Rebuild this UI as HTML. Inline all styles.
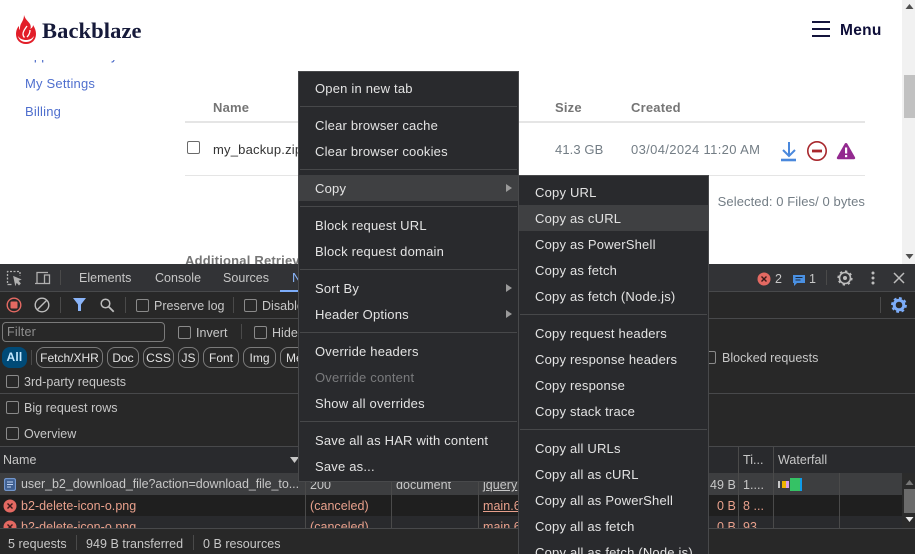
<!DOCTYPE html>
<html><head><meta charset="utf-8"><style>
html,body{margin:0;padding:0;background:#fff}
#r{position:relative;width:915px;height:554px;overflow:hidden;font:13px/20px "Liberation Sans",sans-serif;letter-spacing:.2px;background:#fff}
#r div,#r svg,#r span.t{position:absolute}
.t{white-space:nowrap;height:20px;margin-top:1px}
.l{color:#c7c7c7;font-size:12.5px;letter-spacing:.03px}
.m{color:#e3e3e3}
.r{color:#e8a08c;font-size:12.5px;letter-spacing:.03px}
.sep{height:1px;background:#47484a}
.cb{width:11px;height:11px;border:1px solid #8a8a8a;border-radius:2px;box-sizing:content-box}
.chip{height:19px;border:1px solid #7a7a7a;border-radius:8px;top:347px;color:#e3e3e3;text-align:center;line-height:20px;font-size:12px;letter-spacing:0}
.v{width:1px;background:#4a4a4a}
.g{color:#737d85;letter-spacing:.1px}
</style></head><body><div id="r">
<!-- page -->
<svg style="left:16px;top:14px" width="20" height="31" viewBox="0 0 20 31"><path fill="#e21e29" d="M8 1c1 4 4 6 6 9 1 2 1 4 0 5 2-1 3-2 3-4 2 3 3 6 3 9 0 6-4 10-10 10S0 26 0 20c0-3 1-6 3-8 0 2 0 3 1 4 0-3 0-5 2-8 1-2 2-4 2-7z"/><path fill="#fff" d="M2 22c2 3 5 4 8 4s6-1 8-4c-1 4-4 6-8 6s-7-2-8-6z"/><path fill="none" stroke="#fff" stroke-width="1.300" d="M11 12c-2 3-4 5-4 8 0 1.500.5 2.500 1.500 3.500M14 16c0 3-1 5-3 7"/></svg>
<span class="t" style="left:42px;top:20px;font:bold 22.5px/20px 'Liberation Serif',serif;color:#161a3a;letter-spacing:.1px">Backblaze</span>
<div style="left:812px;top:21px;width:18px;height:2px;background:#14143c"></div>
<div style="left:812px;top:28px;width:18px;height:2px;background:#14143c"></div>
<div style="left:812px;top:35px;width:18px;height:2px;background:#14143c"></div>
<span class="t" style="left:840px;top:20px;font-weight:bold;font-size:15.5px;color:#0d0d38;letter-spacing:.3px">Menu</span>
<div style="left:25px;top:60px;width:140px;height:2.5px;overflow:hidden"><span class="t" style="left:0;top:-15px;color:#4a69c8">Application Keys</span></div>
<span class="t" style="left:25px;top:73px;color:#4f6fce">My Settings</span>
<span class="t" style="left:25px;top:101px;color:#4f6fce">Billing</span>
<span class="t" style="left:213px;top:97px;font-weight:bold;color:#757575">Name</span>
<span class="t" style="left:555px;top:97px;font-weight:bold;color:#757575">Size</span>
<span class="t" style="left:631px;top:97px;font-weight:bold;color:#757575">Created</span>
<div style="left:185px;top:121px;width:680px;height:2px;background:#e5e5e5"></div>
<div style="left:187px;top:141px;width:11px;height:11px;border:1px solid #6a6a6a;border-radius:2px"></div>
<span class="t" style="left:213px;top:139px;color:#333">my_backup.zip</span>
<span class="t g" style="left:555px;top:139px">41.3 GB</span>
<span class="t g" style="left:631px;top:139px;letter-spacing:.35px">03/04/2024 11:20 AM</span>
<svg style="left:780px;top:141px" width="18" height="21" viewBox="0 0 18 21"><path fill="none" stroke="#4a88dc" stroke-width="2" d="M9 1v14M3 9l6 6 6-6"/><path fill="none" stroke="#4a88dc" stroke-width="2.6" d="M1 19h15"/></svg>
<svg style="left:806px;top:140px" width="22" height="22" viewBox="0 0 22 22"><circle cx="11" cy="11" r="9.2" fill="none" stroke="#a8282d" stroke-width="1.6"/><rect x="6" y="9.6" width="10" height="2.8" fill="#a8282d"/></svg>
<svg style="left:836px;top:142px" width="20" height="18" viewBox="0 0 20 18"><path fill="#93298f" d="M10 1c.6 0 1 .3 1.300.8l7.700 13.500c.5 1 0 1.900-1 1.900H2c-1 0-1.500-.9-1-1.900L8.700 1.800C9 1.300 9.400 1 10 1z"/><rect x="9" y="5.500" width="2.200" height="6" fill="#fff"/><rect x="9" y="13" width="2.200" height="2.200" fill="#fff"/></svg>
<div style="left:185px;top:175px;width:680px;height:1px;background:#e5e5e5"></div>
<span class="t g" style="right:50px;top:191px;letter-spacing:.08px">Selected: 0 Files/ 0 bytes</span>
<div style="left:185px;top:250px;width:120px;height:14px;overflow:hidden"><span class="t" style="left:0;top:0;font-weight:bold;color:#757575">Additional Retrieval</span></div>
<!-- scrollbar -->
<div style="left:902px;top:0;width:13px;height:264px;background:#f1f1f1"></div>
<div style="left:904px;top:75px;width:11px;height:43px;background:#c1c1c1"></div>
<svg style="left:904px;top:3px" width="11" height="7"><path fill="#505050" d="M5.500 1l4 5h-8z"/></svg>
<svg style="left:904px;top:253px" width="11" height="7"><path fill="#505050" d="M1.500 1h8l-4 5z"/></svg>
<!-- devtools -->
<div style="left:0;top:264px;width:915px;height:290px;background:#282828"></div>
<div style="left:0;top:264px;width:915px;height:27px;background:#323336"></div>
<div style="left:0;top:291px;width:915px;height:1px;background:#48494b"></div>
<div style="left:0;top:318px;width:915px;height:1px;background:#48494b"></div>
<svg style="left:6px;top:270px" width="16" height="16" fill="none" stroke="#b0b0b0" stroke-width="1.300"><path stroke-dasharray="2 1.500" d="M1.500 13V1.500H14V6"/><path d="M1.500 14.500h4"/><path fill="#b0b0b0" d="M8 7l6 2.500-2.500 1 2.500 3-1 1-2.500-3-1 2.500z"/></svg>
<svg style="left:34px;top:271px" width="17" height="14" fill="none" stroke="#b0b0b0" stroke-width="1.300"><path d="M1 12.500h9M3 12V1.500h11"/><rect x="10.500" y="4" width="5" height="8.500"/></svg>
<div class="v" style="left:60px;top:270px;height:15px"></div>
<span class="t l" style="left:79px;top:267px">Elements</span>
<span class="t l" style="left:155px;top:267px">Console</span>
<span class="t l" style="left:223px;top:267px">Sources</span>
<span class="t" style="left:292px;top:267px;color:#8ab4f8">N</span>
<div style="left:280px;top:290px;width:19px;height:2px;background:#7cacf8"></div>
<svg style="left:757px;top:272px" width="14" height="14"><circle cx="7" cy="7" r="6.500" fill="#e46962"/><path stroke="#3a1a1a" stroke-width="1.400" d="M4.500 4.500l5 5M9.500 4.500l-5 5"/></svg>
<span class="t l" style="left:775px;top:268px">2</span>
<svg style="left:793px;top:274px" width="12" height="12"><path fill="#4a90e2" d="M0 1h12v8H4l-3 3V9H0z"/><path stroke="#1a2a40" d="M2.500 3.500h7M2.500 6h5"/></svg>
<span class="t l" style="left:809px;top:268px">1</span>
<div class="v" style="left:826px;top:270px;height:15px"></div>
<svg style="left:837px;top:270px" width="16" height="16" viewBox="0 0 16 16"><circle cx="8" cy="8" r="5.500" fill="none" stroke="#bdbdbd" stroke-width="1.600"/><circle cx="8" cy="8" r="2" fill="#bdbdbd"/><circle cx="8" cy="8" r="6.800" fill="none" stroke="#bdbdbd" stroke-width="1.600" stroke-dasharray="2.400 2.900"/></svg>
<svg style="left:871px;top:271px" width="4" height="14" fill="#bdbdbd"><circle cx="2" cy="2" r="1.500"/><circle cx="2" cy="7" r="1.500"/><circle cx="2" cy="12" r="1.500"/></svg>
<svg style="left:893px;top:272px" width="12" height="12"><path stroke="#bdbdbd" stroke-width="1.500" d="M1 1l10 10M11 1L1 11"/></svg>
<!-- row2 -->
<svg style="left:6px;top:297px" width="16" height="16"><circle cx="8" cy="8" r="6.800" fill="none" stroke="#e46962" stroke-width="1.400"/><rect x="4.500" y="4.500" width="7" height="7" rx="1" fill="#e46962"/></svg>
<svg style="left:34px;top:297px" width="16" height="16" fill="none" stroke="#bdbdbd" stroke-width="1.400"><circle cx="8" cy="8" r="6.800"/><path d="M3.500 12.500l9-9"/></svg>
<div class="v" style="left:60px;top:297px;height:16px"></div>
<svg style="left:73px;top:298px" width="13" height="13"><path fill="#8ab4f8" d="M0 0h13L8 6.500V13H5V6.500z"/></svg>
<svg style="left:100px;top:298px" width="15" height="15" fill="none" stroke="#bdbdbd" stroke-width="1.500"><circle cx="5.500" cy="5.500" r="4.300"/><path stroke-width="1.800" d="M8.700 8.700l5 5"/></svg>
<div class="v" style="left:125px;top:297px;height:16px"></div>
<div class="cb" style="left:136px;top:299px"></div>
<span class="t l" style="left:154px;top:295px">Preserve log</span>
<div class="v" style="left:233px;top:297px;height:16px"></div>
<div class="cb" style="left:244px;top:299px"></div>
<span class="t l" style="left:262px;top:295px">Disable cache</span>
<div class="v" style="left:880px;top:297px;height:16px"></div>
<svg style="left:891px;top:297px" width="16" height="16" viewBox="0 0 16 16"><circle cx="8" cy="8" r="4.800" fill="none" stroke="#7cacf8" stroke-width="3"/><circle cx="8" cy="8" r="6.800" fill="none" stroke="#7cacf8" stroke-width="2.200" stroke-dasharray="2.800 2.500"/></svg>
<!-- filter -->
<div style="left:2px;top:322px;width:161px;height:18px;border:1px solid #7a7a7a;border-radius:4px"></div>
<span class="t" style="left:7px;top:321px;color:#8f8f8f;font-size:12.5px">Filter</span>
<div class="cb" style="left:178px;top:326px"></div>
<span class="t l" style="left:196px;top:322px">Invert</span>
<div class="v" style="left:241px;top:324px;height:15px"></div>
<div class="cb" style="left:254px;top:326px"></div>
<span class="t l" style="left:272px;top:322px">Hide data URLs</span>
<div style="left:2px;top:347px;width:25px;height:21px;border-radius:8px;background:#004a77;color:#c2e7ff;text-align:center;line-height:21px;font-size:12px;font-weight:bold">All</div>
<div class="v" style="left:31px;top:350px;height:15px"></div>
<div class="chip" style="left:36px;width:65px">Fetch/XHR</div>
<div class="chip" style="left:107px;width:30px">Doc</div>
<div class="chip" style="left:143px;width:29px">CSS</div>
<div class="chip" style="left:178px;width:19px">JS</div>
<div class="chip" style="left:203px;width:34px">Font</div>
<div class="chip" style="left:243px;width:31px">Img</div>
<div class="chip" style="left:280px;width:30px;text-align:left;text-indent:5px">Media</div>
<div class="cb" style="left:703px;top:351px"></div>
<span class="t l" style="left:722px;top:347px">Blocked requests</span>
<div class="cb" style="left:6px;top:375px"></div>
<span class="t l" style="left:24px;top:371px">3rd-party requests</span>
<div style="left:0;top:393px;width:915px;height:1px;background:#48494b"></div>
<div class="cb" style="left:6px;top:401px"></div>
<span class="t l" style="left:24px;top:397px">Big request rows</span>
<div class="cb" style="left:6px;top:427px"></div>
<span class="t l" style="left:24px;top:423px">Overview</span>
<div style="left:0;top:446px;width:915px;height:1px;background:#48494b"></div>
<!-- table -->
<div style="left:0;top:447px;width:915px;height:26px;background:#292a2d"></div>
<div style="left:0;top:473px;width:902px;height:22px;background:#3d3e40"></div>
<div style="left:0;top:495px;width:902px;height:21px;background:#1f1f1f"></div>
<div style="left:0;top:516px;width:902px;height:12px;background:#292a2d"></div>
<div style="left:902px;top:473px;width:13px;height:55px;background:#2b2b2b"></div>
<div style="left:904px;top:489px;width:11px;height:24px;background:#6b6b6b"></div>
<svg style="left:904px;top:479px" width="11" height="7"><path fill="#777" d="M5.500 1l4 5h-8z"/></svg>
<svg style="left:904px;top:516px" width="11" height="7"><path fill="#eee" d="M1.500 1h8l-4 5z"/></svg>
<div class="v" style="left:305px;top:447px;height:81px"></div>
<div class="v" style="left:391px;top:447px;height:81px"></div>
<div class="v" style="left:478px;top:447px;height:81px"></div>
<div class="v" style="left:738px;top:447px;height:81px"></div>
<div class="v" style="left:773px;top:447px;height:81px"></div>
<div class="v" style="left:839px;top:473px;height:55px"></div>
<span class="t l" style="left:3px;top:449px">Name</span>
<svg style="left:290px;top:457px" width="9" height="6"><path fill="#c7c7c7" d="M0 0h9L4.500 6z"/></svg>
<span class="t l" style="left:743px;top:449px">Ti...</span>
<span class="t l" style="left:778px;top:449px">Waterfall</span>
<svg style="left:4px;top:478px" width="12" height="13"><rect x=".6" y=".6" width="10.800" height="11.800" rx="1.500" fill="#3f5f90" stroke="#7aa2e0"/><path stroke="#c2d6f5" d="M3 4h6M3 6.500h6M3 9h4"/></svg>
<div style="left:0;top:474px;width:303px;height:21px;overflow:hidden"><span class="t l" style="left:21px;top:-1px;letter-spacing:-.05px">user_b2_download_file?action=download_file_to...</span></div>
<span class="t l" style="left:310px;top:474px">200</span>
<span class="t l" style="left:396px;top:474px">document</span>
<span class="t l" style="left:483px;top:474px;text-decoration:underline">jquery</span>
<span class="t l" style="left:710px;top:474px">49 B</span>
<span class="t l" style="left:743px;top:474px">1....</span>
<svg style="left:3px;top:499px" width="14" height="14"><circle cx="7" cy="7" r="6.500" fill="#e46962"/><path stroke="#3a1a1a" stroke-width="1.400" d="M4.500 4.500l5 5M9.500 4.500l-5 5"/></svg>
<span class="t r" style="left:21px;top:495px">b2-delete-icon-o.png</span>
<span class="t r" style="left:310px;top:495px">(canceled)</span>
<span class="t r" style="left:483px;top:495px;text-decoration:underline">main.6</span>
<span class="t r" style="left:717px;top:495px">0 B</span>
<span class="t r" style="left:743px;top:495px">8 ...</span>
<div style="left:0;top:516px;width:738px;height:12px;overflow:hidden">
<svg style="left:3px;top:4px" width="14" height="14"><circle cx="7" cy="7" r="6.500" fill="#e46962"/><path stroke="#3a1a1a" stroke-width="1.400" d="M4.500 4.500l5 5M9.500 4.500l-5 5"/></svg>
<span class="t r" style="left:21px;top:0">b2-delete-icon-o.png</span>
<span class="t r" style="left:310px;top:0">(canceled)</span>
<span class="t r" style="left:483px;top:0;text-decoration:underline">main.6</span>
<span class="t r" style="left:717px;top:0">0 B</span>
</div>
<div style="left:738px;top:516px;width:30px;height:12px;overflow:hidden"><span class="t r" style="left:5px;top:0">93</span></div>
<div style="left:778px;top:481px;width:2px;height:7px;background:#c8c8c8"></div>
<div style="left:782px;top:481px;width:4px;height:7px;background:#f0b400"></div>
<div style="left:786px;top:481px;width:3px;height:7px;background:#d9a0e8"></div>
<div style="left:790px;top:478px;width:10px;height:13px;background:#35c265"></div>
<div style="left:800px;top:478px;width:2px;height:13px;background:#0f9be8"></div>
<div style="left:0;top:528px;width:915px;height:1px;background:#48494b"></div>
<div class="v" style="left:76px;top:535px;height:15px"></div>
<div class="v" style="left:193px;top:535px;height:15px"></div>
<span class="t l" style="left:8px;top:533px">5 requests</span>
<span class="t l" style="left:86px;top:533px">949 B transferred</span>
<span class="t l" style="left:203px;top:533px">0 B resources</span>
<!-- context menu -->
<div style="left:298px;top:71px;width:219px;height:409px;background:#292a2d;border:1px solid #48494b"></div>
<div style="left:299px;top:175px;width:219px;height:26px;background:#3f4042"></div>
<div class="sep" style="left:300px;top:106px;width:217px"></div>
<div class="sep" style="left:300px;top:169px;width:217px"></div>
<div class="sep" style="left:300px;top:206px;width:217px"></div>
<div class="sep" style="left:300px;top:269px;width:217px"></div>
<div class="sep" style="left:300px;top:332px;width:217px"></div>
<div class="sep" style="left:300px;top:421px;width:217px"></div>
<span class="t m" style="left:315px;top:78px">Open in new tab</span>
<span class="t m" style="left:315px;top:115px">Clear browser cache</span>
<span class="t m" style="left:315px;top:141px">Clear browser cookies</span>
<span class="t m" style="left:315px;top:178px">Copy</span>
<span class="t m" style="left:315px;top:215px">Block request URL</span>
<span class="t m" style="left:315px;top:241px">Block request domain</span>
<span class="t m" style="left:315px;top:278px">Sort By</span>
<span class="t m" style="left:315px;top:304px">Header Options</span>
<span class="t m" style="left:315px;top:341px">Override headers</span>
<span class="t" style="left:315px;top:367px;color:#7a7b7d">Override content</span>
<span class="t m" style="left:315px;top:393px">Show all overrides</span>
<span class="t m" style="left:315px;top:430px">Save all as HAR with content</span>
<span class="t m" style="left:315px;top:456px">Save as...</span>
<svg style="left:506px;top:184px" width="6" height="8"><path fill="#9a9a9a" d="M0 0l6 4-6 4z"/></svg>
<svg style="left:506px;top:284px" width="6" height="8"><path fill="#9a9a9a" d="M0 0l6 4-6 4z"/></svg>
<svg style="left:506px;top:310px" width="6" height="8"><path fill="#9a9a9a" d="M0 0l6 4-6 4z"/></svg>
<!-- submenu -->
<div style="left:518px;top:175px;width:189px;height:385px;background:#292a2d;border:1px solid #48494b"></div>
<div style="left:519px;top:205px;width:189px;height:26px;background:#3f4042"></div>
<div class="sep" style="left:520px;top:314px;width:187px"></div>
<div class="sep" style="left:520px;top:429px;width:187px"></div>
<span class="t m" style="left:535px;top:182px">Copy URL</span>
<span class="t m" style="left:535px;top:208px">Copy as cURL</span>
<span class="t m" style="left:535px;top:234px">Copy as PowerShell</span>
<span class="t m" style="left:535px;top:260px">Copy as fetch</span>
<span class="t m" style="left:535px;top:286px">Copy as fetch (Node.js)</span>
<span class="t m" style="left:535px;top:323px">Copy request headers</span>
<span class="t m" style="left:535px;top:349px">Copy response headers</span>
<span class="t m" style="left:535px;top:375px">Copy response</span>
<span class="t m" style="left:535px;top:401px">Copy stack trace</span>
<span class="t m" style="left:535px;top:438px">Copy all URLs</span>
<span class="t m" style="left:535px;top:464px">Copy all as cURL</span>
<span class="t m" style="left:535px;top:490px">Copy all as PowerShell</span>
<span class="t m" style="left:535px;top:516px">Copy all as fetch</span>
<span class="t m" style="left:535px;top:542px">Copy all as fetch (Node.js)</span>
</div></body></html>
